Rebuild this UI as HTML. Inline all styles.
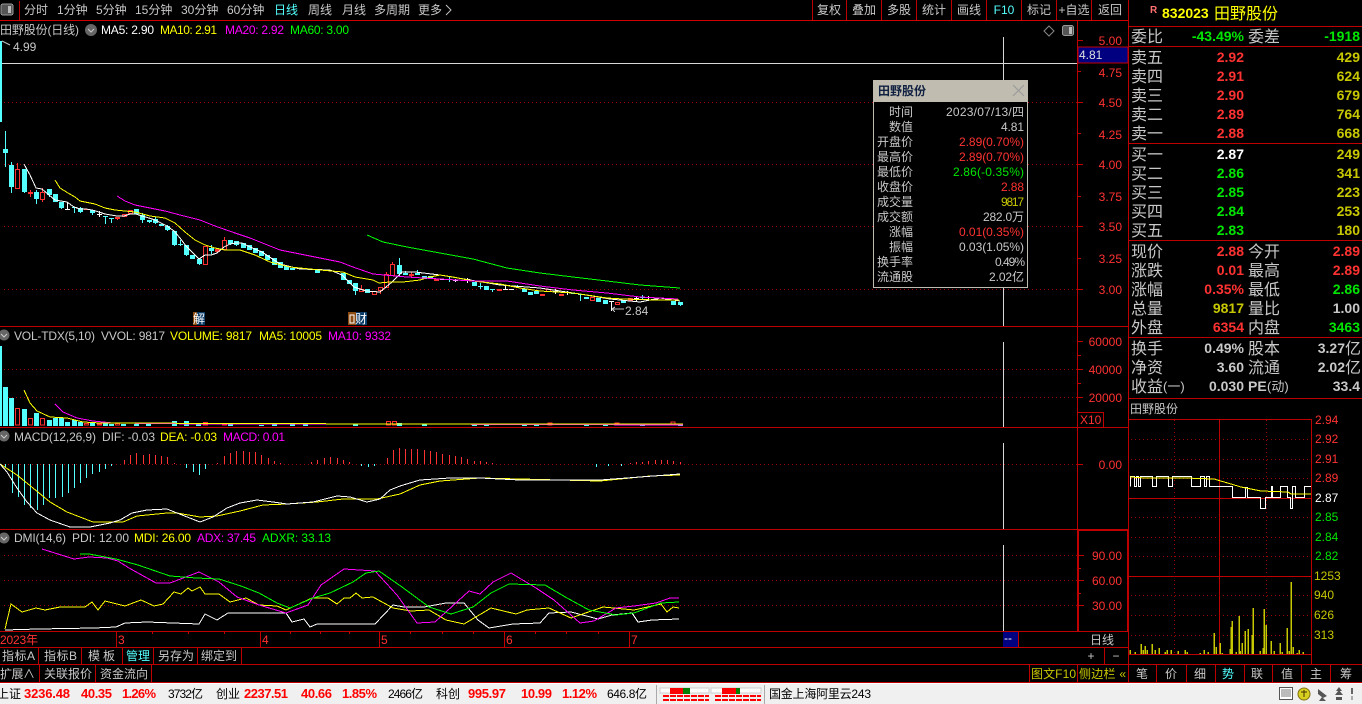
<!DOCTYPE html>
<html lang="zh-CN">
<head>
<meta charset="utf-8">
<title>田野股份</title>
<style>
html,body{margin:0;padding:0;background:#000;width:1362px;height:704px;overflow:hidden}
svg{display:block}
text{font-family:"Liberation Sans","WenQuanYi Zen Hei","Noto Sans CJK SC",sans-serif;font-size:12px;fill:#c8c8c8}
.c{shape-rendering:crispEdges}
.d{stroke:#a00000;stroke-width:1;stroke-dasharray:1 3;fill:none;shape-rendering:crispEdges}
.l{fill:none;stroke-width:1;shape-rendering:crispEdges}
.r{fill:#ff3232}
.e{text-anchor:end}
.m{text-anchor:middle}
.big{font-size:16px}
.b{font-size:14px;font-weight:bold;text-anchor:end}
.gr{fill:#00e600}
.ye{fill:#c8c800}
.Y{fill:#ffff00}
.M{fill:#ff00ff}
.G{fill:#00ff00}
.W{fill:#fff}
.cy{fill:#54ffff}
.k{fill:#000}
.sr{font-weight:bold;fill:#ff0000;font-size:13px}
</style>
</head>
<body>
<svg width="1362" height="704" viewBox="0 0 1362 704" xmlns="http://www.w3.org/2000/svg">
<rect width="1362" height="704" fill="#000"/>

<!-- top toolbar -->
<g class="c">
<rect x="1" y="4" width="12" height="11" rx="2" fill="#555" stroke="#999"/><rect x="8" y="6" width="3" height="7" fill="#bbb"/>
<rect x="19" y="1" width="1" height="19" fill="#c00000"/>
<rect x="0" y="20" width="1128" height="1" fill="#d00000"/>
<path d="M812.5 0V20M846.5 0V20M881.5 0V20M916.5 0V20M951.5 0V20M986.5 0V20M1021.5 0V20M1056.5 0V20M1091.5 0V20" stroke="#c00000"/>
</g>
<text x="24" y="14">分时</text><text x="57" y="14">1分钟</text><text x="96" y="14">5分钟</text><text x="135" y="14">15分钟</text><text x="181" y="14">30分钟</text><text x="227" y="14">60分钟</text><text x="274" y="14" class="cy">日线</text><text x="308" y="14">周线</text><text x="342" y="14">月线</text><text x="374" y="14">多周期</text><text x="418" y="14">更多</text>
<path d="M446 5l5 5-5 5" fill="none" stroke="#c0c0c0"/>
<text x="829" y="14" class="m">复权</text><text x="864" y="14" class="m">叠加</text><text x="899" y="14" class="m">多股</text><text x="934" y="14" class="m">统计</text><text x="969" y="14" class="m">画线</text><text x="1004" y="14" class="m cy">F10</text><text x="1039" y="14" class="m">标记</text><text x="1074" y="14" class="m">+自选</text><text x="1110" y="14" class="m">返回</text>

<!-- panel frame -->
<g class="c" fill="#c00000">
<rect x="1077" y="21" width="1" height="611"/>
<rect x="1128" y="0" width="1" height="683"/>
<rect x="0" y="326" width="1128" height="1"/>
<rect x="0" y="427" width="1128" height="1"/>
<rect x="0" y="529" width="1128" height="1"/>
<rect x="0" y="631" width="1128" height="1"/>
<rect x="0" y="647" width="1128" height="1"/>
<rect x="0" y="664" width="1128" height="1"/>
<rect x="0" y="682" width="1362" height="1"/>
<rect x="1078" y="530" width="1" height="101"/><rect x="1127" y="530" width="1" height="101"/><rect x="1078" y="530" width="50" height="1"/>
</g>

<!-- grids -->
<path class="d" d="M4 102.5H1077M4 164.5H1077M4 226.5H1077M4 289.5H1077M4 369.5H1077M4 397.5H1077M0 464.5H1077M4 555.5H1077M4 580.5H1077M4 605.5H1077"/>

<!-- axis ticks -->
<path class="c" stroke="#c00000" fill="none" d="M1078 40.5h5M1078 71.5h3M1078 102.5h5M1078 133.5h3M1078 164.5h5M1078 196.5h3M1078 226.5h5M1078 258.5h3M1078 289.5h5M1078 341.5h5M1078 355.5h3M1078 369.5h5M1078 383.5h3M1078 397.5h5M1078 464.5h5M1079 555.5h5M1079 568.5h2M1079 580.5h5M1079 593.5h2M1079 605.5h5"/>
<g class="r">
<text class="e r" x="1122" y="45">5.00</text><text class="e r" x="1122" y="77">4.75</text><text class="e r" x="1122" y="107">4.50</text><text class="e r" x="1122" y="139">4.25</text><text class="e r" x="1122" y="169">4.00</text><text class="e r" x="1122" y="201">3.75</text><text class="e r" x="1122" y="231">3.50</text><text class="e r" x="1122" y="263">3.25</text><text class="e r" x="1122" y="294">3.00</text>
<text class="e r" x="1122" y="346">60000</text><text class="e r" x="1122" y="374">40000</text><text class="e r" x="1122" y="402">20000</text>
<text class="e r" x="1122" y="469">0.00</text>
<text class="e r" x="1122" y="560">90.00</text><text class="e r" x="1122" y="585">60.00</text><text class="e r" x="1122" y="610">30.00</text>
</g>
<rect x="1077.5" y="412.5" width="26" height="15" fill="none" stroke="#c00000" class="c"/>
<text x="1080" y="424" class="r">X10</text>

<!-- crosshair -->
<g class="c">
<rect x="0" y="63" width="1077" height="1" fill="#d8d8d8"/>
<path d="M1003.5 37V326M1003.5 342V427M1003.5 443V529M1003.5 545V631" stroke="#d8d8d8" fill="none"/>
<rect x="1078" y="47" width="50" height="16" fill="#000080" stroke="#c00000"/>
</g>
<text x="1079" y="59" style="fill:#e0e0e0">4.81</text>

<!-- headers -->
<text x="0" y="34" textLength="79">田野股份(日线)</text>
<circle cx="91" cy="30" r="6" fill="#666"/><path d="M88 29l3 3 3-3" stroke="#ccc" fill="none"/>
<text x="101" y="34" class="W" textLength="53">MA5: 2.90</text><text x="160" y="34" class="Y" textLength="57">MA10: 2.91</text><text x="225" y="34" class="M" textLength="59">MA20: 2.92</text><text x="290" y="34" class="G" textLength="59">MA60: 3.00</text>
<path d="M1049 26l5 5-5 5-5-5z" fill="none" stroke="#888"/>
<rect x="1062.5" y="25.5" width="11" height="10" rx="2" fill="#555" stroke="#999"/><rect x="1069" y="27" width="3" height="7" fill="#bbb"/>

<circle cx="4" cy="335" r="5.5" fill="#666"/><path d="M1 334l3 3 3-3" stroke="#ccc" fill="none"/>
<text x="14" y="340" textLength="81">VOL-TDX(5,10)</text><text x="101" y="340" textLength="64">VVOL: 9817</text><text x="170" y="340" class="Y" textLength="82">VOLUME: 9817</text><text x="259" y="340" class="Y" textLength="63">MA5: 10005</text><text x="328" y="340" class="M" textLength="63">MA10: 9332</text>
<circle cx="4" cy="436" r="5.5" fill="#666"/><path d="M1 435l3 3 3-3" stroke="#ccc" fill="none"/>
<text x="14" y="441" textLength="82">MACD(12,26,9)</text><text x="102" y="441" textLength="53">DIF: -0.03</text><text x="160" y="441" class="Y" textLength="57">DEA: -0.03</text><text x="223" y="441" class="M" textLength="62">MACD: 0.01</text>
<circle cx="4" cy="538" r="5.5" fill="#666"/><path d="M1 537l3 3 3-3" stroke="#ccc" fill="none"/>
<text x="14" y="542" textLength="52">DMI(14,6)</text><text x="72" y="542" textLength="57">PDI: 12.00</text><text x="134" y="542" class="Y" textLength="57">MDI: 26.00</text><text x="197" y="542" class="M" textLength="59">ADX: 37.45</text><text x="262" y="542" class="G" textLength="69">ADXR: 33.13</text>

<!-- candles -->
<g class="c">
<path fill="#54ffff" d="M0 41h2V122H0zM3 149h5v4h-5zM9 165h5V187h-5zM22 169h5V192h-5zM34 192h5v7h-5zM47 189h5v6h-5zM53 194h5v8h-5zM59 202h5v6h-5zM78 208h5v4h-5zM90 210h5v3h-5zM134 209h5v5h-5zM140 215h5v5h-5zM147 220h5v2h-5zM153 219h5v4h-5zM159 224h5v2h-5zM165 226h5v4h-5zM172 231h5v14h-5zM184 245h5v10h-5zM190 255h5v4h-5zM197 259h5v5h-5zM209 248h5v3h-5zM228 240h5v4h-5zM234 241h5v4h-5zM241 243h5v5h-5zM247 245h5v5h-5zM253 248h5v5h-5zM259 251h5v5h-5zM265 255h5v5h-5zM272 258h5v7h-5zM278 262h5v6h-5zM284 266h5v4h-5zM290 268h5v2h-5zM315 270h5v3h-5zM341 273h5v7h-5zM347 280h5v4h-5zM353 283h5v8h-5zM365 289h5v4h-5zM397 265h5v9h-5zM403 273h5v2h-5zM415 273h5v2h-5zM422 276h5v3h-5zM428 276h5v3h-5zM472 282h5v4h-5zM484 286h5v4h-5zM522 289h5v3h-5zM528 292h5v3h-5zM534 291h5v3h-5zM571 293h5v1h-5zM584 297h5v2h-5zM596 298h5v4h-5zM603 300h5v4h-5zM621 300h5v3h-5zM671 301h5v4h-5zM678 302h5v3h-5z"/>
<path stroke="#54ffff" fill="none" d="M5.5 131V167M11.5 162V193M24.5 169V193M36.5 190V204M49.5 189V197M61.5 202V209M80.5 207V213M92.5 210V215M142.5 213V223M149.5 220V223M155.5 217V224M167.5 225V231M174.5 231V246M186.5 245V256M199.5 259V265M211.5 245V254M230.5 240V245M236.5 241V246M355.5 283V295M399.5 258V276M405.5 271V275M417.5 270V275M680.5 302V306M72 207.5h5M74.5 207V213M103 216.5h5M105.5 216V224M109 218.5h5M111.5 218V223M178 244.5h5M180.5 240V246M447 279.5h5M449.5 277V282M478 286.5h5M480.5 283V289M490 289.5h5M492.5 289V292M515 286.5h5M517.5 285V288M578 294.5h5M580.5 294V301M640 297.5h5M642.5 295V299"/>
<path stroke="#fff" fill="none" d="M65 209.5h5M67.5 203V209M97 214.5h5M99.5 211V217M440 279.5h5M453 280.5h5M455.5 279V282M465 279.5h5M467.5 278V283M503 289.5h5M505.5 286V289M509 289.5h5M553 291.5h5M555.5 289V294M565 292.5h5M567.5 291V295M609 301.5h5M611.5 301V311M634 298.5h5M636.5 297V301M646 297.5h5M648.5 296V300M653 299.5h5"/>
<path fill="#ff3232" d="M28 192h5v2h-5zM84 209h5v1h-5zM115 217h5v2h-5zM215 249h5v3h-5zM409 274h5v2h-5zM434 279h5v2h-5zM497 289h5v2h-5zM540 294h5v2h-5zM559 294h5v2h-5zM628 298h5v3h-5z"/>
<path stroke="#ff3232" fill="none" d="M30.5 190V197M117.5 217V220M217.5 248V253M411.5 272V278M15.5 169.5h4v19h-4zM17.5 163V169M40.5 192.5h4v7h-4zM42.5 188V192M42.5 200V202M122.5 214.5h4v2h-4zM128.5 210.5h4v3h-4zM203.5 246.5h4v18h-4zM222.5 240.5h4v9h-4zM224.5 237V240M359.5 289.5h4v2h-4zM361.5 285V289M372.5 291.5h4v3h-4zM378.5 287.5h4v3h-4zM380.5 291V294M384.5 274.5h4v13h-4zM386.5 272V274M390.5 264.5h4v11h-4zM392.5 262V264M546.5 289.5h4v2h-4zM590.5 297.5h4v3h-4zM615.5 302.5h4v2h-4z"/>
</g>

<!-- MA lines main -->
<polyline class="l" stroke="#fff" points="24,164 30,175 36,188 42,189 49,195 55,200 61,201 67,202 74,207 80,209 86,209 92,210 99,212 105,214 111,215 117,216 124,216 130,214 136,214 142,216 149,218 155,220 161,223 167,226 174,231 180,238 186,246 192,252 199,259 205,255 211,255 217,253 224,247 230,244 236,243 242,243 250,247 262,252 280,264 300,269 330,270 342,275 354,287 366,291 380,292 392,282 402,272 415,272 440,275 470,280 500,285 540,288 580,294 610,299 640,302 660,298 680,301"/>
<polyline class="l" stroke="#ff0" points="55,180 60,188 68,193 75,197 80,201 85,202 95,204 105,208 115,210 125,211 135,212 150,216 165,218 175,223 185,232 195,240 205,245 215,248 225,250 240,250 255,255 270,262 290,267 320,270 343,272 355,277 373,280 379,283 390,282 403,282 420,280 430,277 440,275 453,277 473,281 500,284 520,288 540,291 573,293 607,298 623,299 657,300 679,300"/>
<polyline class="l" stroke="#f0f" points="117,196 125,201 135,205 150,208 165,211 180,215 200,220 215,226 235,233 250,238 280,250 310,256 340,262 353,267 373,274 407,277 440,279 473,281 507,281 540,286 573,290 607,293 640,297 678,299"/>
<polyline class="l" stroke="#0f0" points="367,235 383,242 407,247 440,253 473,259 507,268 540,273 573,277 607,281 640,285 680,288"/>
<path d="M2 41l8 4" stroke="#c0c0c0" fill="none"/>
<text x="13" y="51">4.99</text>
<path class="c" d="M612 309h12M612 309l3-2M612 309l3 3" stroke="#c0c0c0" fill="none"/>
<text x="625" y="315">2.84</text>

<!-- badges -->
<rect x="193" y="312" width="4" height="13" fill="#8a4a10"/><rect x="197" y="312" width="8" height="13" fill="#0a3a66"/>
<text x="193" y="323" class="W">解</text>
<rect x="348" y="312" width="8" height="13" fill="#8a4a10"/><rect x="356" y="312" width="11" height="13" fill="#0a3a66"/>
<path d="M350 315h4v8h-4z" fill="none" stroke="#fff"/><text x="355" y="323" class="W">财</text>

<!-- popup -->
<rect x="873.5" y="80.5" width="154" height="207" fill="#000" stroke="#c0bdb0"/>
<rect x="874" y="81" width="154" height="21" fill="#c0bdb0"/>
<text x="878" y="95" style="fill:#102040;font-weight:bold">田野股份</text>
<path d="M1013 85l11 11M1024 85l-11 11" stroke="#989898" fill="none"/>
<g>
<text class="e" x="913" y="116">时间</text><text class="e" x="1024" y="116" textLength="78">2023/07/13/四</text>
<text class="e" x="913" y="131">数值</text><text class="e" x="1024" y="131" textLength="23">4.81</text>
<text class="e" x="913" y="146">开盘价</text><text class="e r" x="1024" y="146" textLength="65">2.89(0.70%)</text>
<text class="e" x="913" y="161">最高价</text><text class="e r" x="1024" y="161" textLength="65">2.89(0.70%)</text>
<text class="e" x="913" y="176">最低价</text><text class="e gr" x="1024" y="176" textLength="71">2.86(-0.35%)</text>
<text class="e" x="913" y="191">收盘价</text><text class="e r" x="1024" y="191" textLength="23">2.88</text>
<text class="e" x="913" y="206">成交量</text><text class="e ye" x="1024" y="206" textLength="23">9817</text>
<text class="e" x="913" y="221">成交额</text><text class="e" x="1024" y="221" textLength="41">282.0万</text>
<text class="e" x="913" y="236">涨幅</text><text class="e r" x="1024" y="236" textLength="65">0.01(0.35%)</text>
<text class="e" x="913" y="251">振幅</text><text class="e" x="1024" y="251" textLength="65">0.03(1.05%)</text>
<text class="e" x="913" y="266">换手率</text><text class="e" x="1025" y="266" textLength="30">0.49%</text>
<text class="e" x="913" y="281">流通股</text><text class="e" x="1024" y="281" textLength="35">2.02亿</text>
</g>

<!-- VOL -->
<g class="c">
<path fill="#54ffff" d="M0 346h2V426H0zM3 387h5V426H3zM9 398h5V426H9zM22 409h5V426H22zM34 413h5V426H34zM47 420h5V426H47zM53 418h5V426H53zM59 418h5V426H59zM65 422h5V426H65zM72 420h5V426H72zM78 422h5V426H78zM90 422h5V426H90zM103 422h5V426H103zM109 424h5V426H109zM121 424h5V426H121zM134 424h5V426H134zM146 424h5V426H146zM172 421h5V426H172zM184 421h5V426H184zM196 424h5V426H196zM228 424h5V426H228zM259 425h5V426H259zM272 424h5V426H272zM290 424h5V426H290zM303 424h5V426H303zM353 424h5V426H353zM397 423h5V426H397zM422 424h5V426H422zM472 424h5V426H472zM484 424h5V426H484zM522 424h5V426H522zM534 424h5V426H534zM584 424h5V426H584zM603 424h5V426H603zM640 424h5V426H640zM678 424h5V426H678z"/>
<path stroke="#ff3232" fill="none" d="M15.5 408.5h4V425h-4zM28.5 418.5h4V425h-4zM40.5 418.5h4V425h-4zM84.5 423.5h4V425h-4zM97.5 424h4V425h-4zM115.5 423.5h4V425h-4zM203.5 422.5h4V425h-4zM222.5 423.5h4V425h-4zM386.5 421.5h4V425h-4zM392.5 421.5h4V425h-4zM548 423h4V425h-4zM615 423h4V425h-4zM671 422h4V425h-4z"/>
</g>
<polyline class="l" stroke="#f0f" points="55,404 63,412 77,418 93,421 113,423 200,424 400,424 683,425"/>
<polyline class="l" stroke="#ff0" points="24,390 30,403 37,411 50,417 67,418 83,422 100,423 400,424 683,424"/>

<!-- MACD bars -->
<path class="c" stroke="#54ffff" stroke-width="1" fill="none" d="M5.5 464V468M12.5 464V493M18.5 464V497M24.5 464V505M30.5 464V508M37.5 464V510M43.5 464V505M49.5 464V498M55.5 464V498M62.5 464V497M68.5 464V493M74.5 464V488M80.5 464V483M86.5 464V478M92.5 464V474M99.5 464V472M105.5 464V469M111.5 464V466M186.5 464V468M193.5 464V472M199.5 464V475M205.5 464V469M361.5 464V466M368.5 464V467M374.5 464V466M596.5 464V467M608.5 464V466M621.5 464V466"/>
<path class="c" stroke="#ff3232" stroke-width="1" fill="none" d="M124.5 464V460M130.5 464V455M136.5 464V453M143.5 464V455M149.5 464V454M155.5 464V455M161.5 464V456M167.5 464V457M174.5 464V463M217.5 464V463M224.5 464V456M230.5 464V453M236.5 464V451M243.5 464V451M249.5 464V452M255.5 464V452M261.5 464V455M268.5 464V458M274.5 464V461M280.5 464V463M311.5 464V462M317.5 464V460M324.5 464V458M330.5 464V457M337.5 464V458M343.5 464V460M349.5 464V462M387.5 464V458M393.5 464V450M399.5 464V448M405.5 464V449M411.5 464V449M417.5 464V449M424.5 464V450M430.5 464V451M436.5 464V452M442.5 464V454M449.5 464V455M455.5 464V456M461.5 464V457M467.5 464V459M474.5 464V461M480.5 464V461M486.5 464V462M492.5 464V463M630.5 464V463M636.5 464V462M642.5 464V462M648.5 464V461M655.5 464V460M661.5 464V460M667.5 464V460M673.5 464V461M680.5 464V462"/>
<polyline class="l" stroke="#ff0" points="0,464 17,475 33,488 50,502 67,512 93,522 123,522 137,516 167,513 177,513 200,517 217,516 240,511 263,505 287,504 317,502 343,499 377,499 400,494 420,485 440,481 480,478 600,481 650,476 680,475"/>
<polyline class="l" stroke="#fff" points="0,464 7,472 17,488 27,502 37,513 50,520 70,527 90,527 110,523 120,520 132,513 147,510 167,509 177,513 200,522 213,517 227,508 240,503 257,500 273,502 287,504 313,502 337,496 350,497 367,502 380,499 390,490 400,486 420,480 450,478 480,478 520,480 560,480 600,480 640,477 680,474"/>

<!-- DMI -->
<polyline class="l" stroke="#fff" points="5,630 38,629 94,628 116,627 125,623 147,622 199,624 205,614 217,620 228,613 286,613 292,622 304,619 310,627 317,624 375,624 393,605 404,607 424,607 446,603 464,603 478,620 489,628 513,624 540,623 549,613 571,612 598,619 612,615 632,613 638,622 652,620 679,619"/>
<polyline class="l" stroke="#ff0" points="5,629 11,604 22,612 36,608 45,610 60,607 85,607 92,602 98,610 105,601 125,606 141,600 154,606 163,604 174,592 181,594 188,588 192,591 200,587 205,594 219,594 230,602 246,598 259,605 277,606 286,610 312,598 328,598 337,604 344,598 350,598 356,593 362,598 373,597 393,608 411,611 429,610 446,620 464,624 491,608 516,614 527,610 549,608 571,618 603,607 634,610 661,604 667,612 673,607 679,608"/>
<polyline class="l" stroke="#f0f" points="42,549 74,559 89,557 107,558 118,561 129,568 156,583 170,583 199,572 219,582 237,597 259,605 286,613 308,605 321,585 344,569 375,571 397,595 417,623 435,622 469,591 480,594 493,582 511,573 536,588 554,600 580,623 594,621 616,608 634,606 656,603 670,598 679,598"/>
<polyline class="l" stroke="#0f0" points="80,554 89,554 116,559 138,565 170,576 196,578 219,579 241,586 259,593 277,603 290,608 313,598 330,593 353,582 366,573 379,571 402,587 429,607 451,614 473,607 491,593 509,584 545,585 567,598 589,610 616,615 634,613 661,603 679,602"/>

<!-- time axis -->
<g class="c" fill="#c00000">
<rect x="116" y="632" width="1" height="15"/><rect x="260" y="632" width="1" height="15"/><rect x="379" y="632" width="1" height="15"/><rect x="504" y="632" width="1" height="15"/><rect x="629" y="632" width="1" height="15"/>
<path d="M152 632h1v2h-1zM188 632h1v2h-1zM224 632h1v2h-1zM290 632h1v2h-1zM320 632h1v2h-1zM349 632h1v2h-1zM410 632h1v2h-1zM442 632h1v2h-1zM473 632h1v2h-1zM535 632h1v2h-1zM566 632h1v2h-1zM598 632h1v2h-1z"/>
<rect x="1003" y="632" width="15" height="15" fill="#000080"/>
<rect x="1018" y="632" width="1" height="15"/>
<rect x="1104" y="647" width="1" height="17"/>
</g>
<text x="0" y="644" class="r" textLength="38">2023年</text>
<text x="118" y="644" class="r">3</text><text x="262" y="644" class="r">4</text><text x="381" y="644" class="r">5</text><text x="506" y="644" class="r">6</text><text x="631" y="644" class="r">7</text>
<text x="1004" y="642" class="W">--</text>
<text x="1102" y="644" class="m">日线</text>
<text x="1091" y="660" class="m">+</text><text x="1116" y="660" class="m">−</text>

<!-- bottom buttons -->
<path class="c" stroke="#c00000" fill="none" d="M38.5 648V664M81.5 648V664M122.5 648V664M153.5 648V664M197.5 648V664M241.5 648V664M39.5 665V682M95.5 665V682M151.5 665V682M1029.5 665V682M1077.5 665V682"/>
<text x="2" y="660" textLength="33">指标A</text><text x="44" y="660" textLength="33">指标B</text><text x="88" y="660" textLength="27">模 板</text><text x="126" y="660" class="cy">管理</text><text x="158" y="660">另存为</text><text x="201" y="660">绑定到</text>
<text x="0" y="678" textLength="35">扩展∧</text><text x="44" y="678">关联报价</text><text x="100" y="678">资金流向</text>
<text x="1031" y="678" class="ye" textLength="45">图文F10</text><text x="1079" y="678" class="ye" textLength="47">侧边栏 «</text>

<!-- right panel: header -->
<path class="c" fill="#c00000" d="M1129 26h233v1h-233zM1129 46h233v1h-233zM1129 143h233v1h-233zM1129 240h233v1h-233zM1129 337h233v1h-233zM1129 398h233v1h-233z"/>
<text x="1150" y="13" style="font-size:10px;font-weight:bold;fill:#ff7070">R</text>
<text x="1162" y="18" style="font-size:14px;font-weight:bold;fill:#ffff00">832023</text>
<text x="1214" y="19" class="big Y">田野股份</text>

<text x="1131" y="42" class="big">委比</text><text x="1244" y="41" class="b gr">-43.49%</text><text x="1248" y="42" class="big">委差</text><text x="1360" y="41" class="b gr">-1918</text>

<text x="1131" y="63" class="big">卖五</text><text x="1244" y="62" class="b r">2.92</text><text x="1360" y="62" class="b ye">429</text>
<text x="1131" y="82" class="big">卖四</text><text x="1244" y="81" class="b r">2.91</text><text x="1360" y="81" class="b ye">624</text>
<text x="1131" y="101" class="big">卖三</text><text x="1244" y="100" class="b r">2.90</text><text x="1360" y="100" class="b ye">679</text>
<text x="1131" y="120" class="big">卖二</text><text x="1244" y="119" class="b r">2.89</text><text x="1360" y="119" class="b ye">764</text>
<text x="1131" y="139" class="big">卖一</text><text x="1244" y="138" class="b r">2.88</text><text x="1360" y="138" class="b ye">668</text>

<text x="1131" y="160" class="big">买一</text><text x="1244" y="159" class="b W">2.87</text><text x="1360" y="159" class="b ye">249</text>
<text x="1131" y="179" class="big">买二</text><text x="1244" y="178" class="b gr">2.86</text><text x="1360" y="178" class="b ye">341</text>
<text x="1131" y="198" class="big">买三</text><text x="1244" y="197" class="b gr">2.85</text><text x="1360" y="197" class="b ye">223</text>
<text x="1131" y="217" class="big">买四</text><text x="1244" y="216" class="b gr">2.84</text><text x="1360" y="216" class="b ye">253</text>
<text x="1131" y="236" class="big">买五</text><text x="1244" y="235" class="b gr">2.83</text><text x="1360" y="235" class="b ye">180</text>

<text x="1131" y="257" class="big">现价</text><text x="1244" y="256" class="b r">2.88</text><text x="1248" y="257" class="big">今开</text><text x="1360" y="256" class="b r">2.89</text>
<text x="1131" y="276" class="big">涨跌</text><text x="1244" y="275" class="b r">0.01</text><text x="1248" y="276" class="big">最高</text><text x="1360" y="275" class="b r">2.89</text>
<text x="1131" y="295" class="big">涨幅</text><text x="1244" y="294" class="b r">0.35%</text><text x="1248" y="295" class="big">最低</text><text x="1360" y="294" class="b gr">2.86</text>
<text x="1131" y="314" class="big">总量</text><text x="1244" y="313" class="b ye">9817</text><text x="1248" y="314" class="big">量比</text><text x="1360" y="313" class="b">1.00</text>
<text x="1131" y="333" class="big">外盘</text><text x="1244" y="332" class="b r">6354</text><text x="1248" y="333" class="big">内盘</text><text x="1360" y="332" class="b gr">3463</text>

<text x="1131" y="354" class="big">换手</text><text x="1244" y="353" class="b">0.49%</text><text x="1248" y="354" class="big">股本</text><text x="1345" y="353" class="b">3.27</text><text x="1345" y="354" class="big">亿</text>
<text x="1131" y="373" class="big">净资</text><text x="1244" y="372" class="b">3.60</text><text x="1248" y="373" class="big">流通</text><text x="1345" y="372" class="b">2.02</text><text x="1345" y="373" class="big">亿</text>
<text x="1131" y="392" class="big">收益</text><text x="1163" y="391" style="font-size:13px">(一)</text><text x="1244" y="391" class="b">0.030</text><text x="1248" y="391" style="font-size:14px;font-weight:bold">PE</text><text x="1267" y="391" style="font-size:13px">(动)</text><text x="1360" y="391" class="b">33.4</text>

<!-- mini chart -->
<text x="1130" y="413">田野股份</text>
<path class="c" fill="#c00000" d="M1129 419h182v1h-182zM1129 498h182v1h-182zM1129 576h182v1h-182zM1129 654h182v1h-182zM1129 664h233v1h-233zM1219 419h1v235h-1zM1311 419h1v245h-1z"/>
<path class="d" d="M1131 439.500H1311M1131 459.500H1311M1131 478.500H1311M1131 517.500H1311M1131 537.500H1311M1131 556.500H1311M1131 595.500H1311M1131 615.500H1311M1131 635.500H1311M1174.500 420V654M1266.500 420V654"/>
<path class="c" fill="none" stroke="#c8c800" stroke-width="1.500" d="M1130 654V650M1135 654V652M1141 654V644M1143 654V650M1145 654V646M1147 654V650M1152 654V644M1155 654V650M1159 654V648M1165 654V652M1167 654V650M1171 654V650M1178 654V651M1185 654V650M1187 654V652M1200 654V653M1204 654V650M1208 654V652M1214 654V633M1216 654V647M1220 654V643M1222 654V653M1230 654V649M1231 654V627M1232 654V621M1236 654V652M1239 654V616M1240 654V651M1242 654V643M1245 654V631M1248 654V629M1252 654V635M1253 654V608M1260 654V651M1263 654V648M1264 654V609M1266 654V625M1271 654V641M1274 654V651M1280 654V643M1282 654V652M1287 654V628M1289 654V651M1291 654V582M1293 654V647M1297 654V653M1299 654V650M1303 654V652"/>
<path class="c" fill="none" stroke="#fff" d="M1130.500 486.500V476.500H1134.500V486.500H1136.500V476.500H1138.500V486.500H1140.500V476.500H1152.500V486.500H1156.500V476.500H1168.500V486.500H1172.500V476.500H1191.500V486.500H1200.500V476.500H1204.500V486.500H1206.500V476.500H1209.500V486.500H1232.500V497.500H1245.500V487.500H1247.500V497.500H1260.500V508.500H1265.500V497.500H1271.500V486.500H1272.500V497.500H1280.500V486.500H1287.500V497.500H1290.500V508.500H1292.500V486.500H1295.500V497.500H1304.500V486.500H1311"/>
<polyline class="l" stroke="#ff0" points="1130,477 1145,478 1185,478 1214,479 1231,484 1241,487 1261,491 1288,492 1291,494 1311,494"/>
<text x="1315" y="424" class="r">2.94</text><text x="1315" y="443" class="r">2.92</text><text x="1315" y="463" class="r">2.91</text><text x="1315" y="482" class="r">2.89</text><text x="1315" y="502" class="W">2.87</text><text x="1315" y="521" class="gr">2.85</text><text x="1315" y="541" class="gr">2.84</text><text x="1315" y="560" class="gr">2.82</text><text x="1314" y="580" class="ye">1253</text><text x="1314" y="599" class="ye">940</text><text x="1314" y="619" class="ye">626</text><text x="1314" y="639" class="ye">313</text>

<!-- tabs -->
<path class="c" stroke="#c00000" fill="none" d="M1156.500 665V682M1186.500 665V682M1215.500 665V682M1244.500 665V682M1272.500 665V682M1301.500 665V682M1330.500 665V682"/>
<text x="1142" y="678" class="m">笔</text><text x="1171" y="678" class="m">价</text><text x="1200" y="678" class="m">细</text><text x="1228" y="678" class="m cy">势</text><text x="1257" y="678" class="m">联</text><text x="1287" y="678" class="m">值</text><text x="1316" y="678" class="m">主</text><text x="1346" y="678" class="m">筹</text>

<!-- status bar -->
<rect x="0" y="683" width="1362" height="21" fill="#f0f0f0"/>
<rect x="0" y="683" width="1362" height="1" fill="#fff"/>
<text x="-3" y="698" class="k" style="font-size:12px">上证</text>
<text x="24" y="698" class="sr" textLength="46">3236.48</text><text x="81" y="698" class="sr" textLength="31">40.35</text><text x="122" y="698" class="sr" textLength="34">1.26%</text><text x="168" y="698" class="k" textLength="35">3732亿</text>
<text x="216" y="698" class="k">创业</text>
<text x="244" y="698" class="sr" textLength="44">2237.51</text><text x="301" y="698" class="sr" textLength="31">40.66</text><text x="342" y="698" class="sr" textLength="35">1.85%</text><text x="388" y="698" class="k" textLength="35">2466亿</text>
<text x="436" y="698" class="k">科创</text>
<text x="468" y="698" class="sr" textLength="38">995.97</text><text x="521" y="698" class="sr" textLength="31">10.99</text><text x="562" y="698" class="sr" textLength="35">1.12%</text><text x="607" y="698" class="k" textLength="40">646.8亿</text>
<g class="c">
<rect x="656" y="685" width="1" height="19" fill="#aaa"/><rect x="764" y="685" width="1" height="19" fill="#aaa"/>
<rect x="660" y="688" width="49" height="5" fill="#fff" stroke="#ccc"/><rect x="711" y="688" width="50" height="5" fill="#fff" stroke="#ccc"/>
<rect x="670" y="688" width="13" height="6" fill="#f00"/><rect x="683" y="688" width="7" height="6" fill="#008000"/>
<rect x="722" y="688" width="14" height="6" fill="#f00"/><rect x="736" y="688" width="4" height="6" fill="#008000"/>
<path d="M663 696h46M663 700h46M715 696h46M715 700h46" stroke="#f00" stroke-width="2" stroke-dasharray="6 1" fill="none"/>
</g>
<text x="769" y="698" class="k" textLength="102">国金上海阿里云243</text>
<!-- tray icons -->
<g class="c">
<rect x="1279.500" y="687.500" width="13" height="12" fill="#fff" stroke="#555"/>
<path d="M1281 690h10M1281 692h10M1281 694h10M1281 696h10" stroke="#777"/>
</g>
<circle cx="1304" cy="694" r="6" fill="#d8d020" stroke="#807010"/><path d="M1304 690v7M1301 692h6" stroke="#403000" fill="none"/>
<path d="M1318 689l9 7-4 2-5-4zM1322 697l-3 4h7z" fill="#555"/>
<path d="M1339 687l3 4h-6zM1339 690l4 5h-8zM1336 697h6v3h-6z" fill="#555"/>
<path d="M1351 688h2v6h-2zM1351.500 696h1v4h-1z" fill="#666"/>
</svg>
</body>
</html>
